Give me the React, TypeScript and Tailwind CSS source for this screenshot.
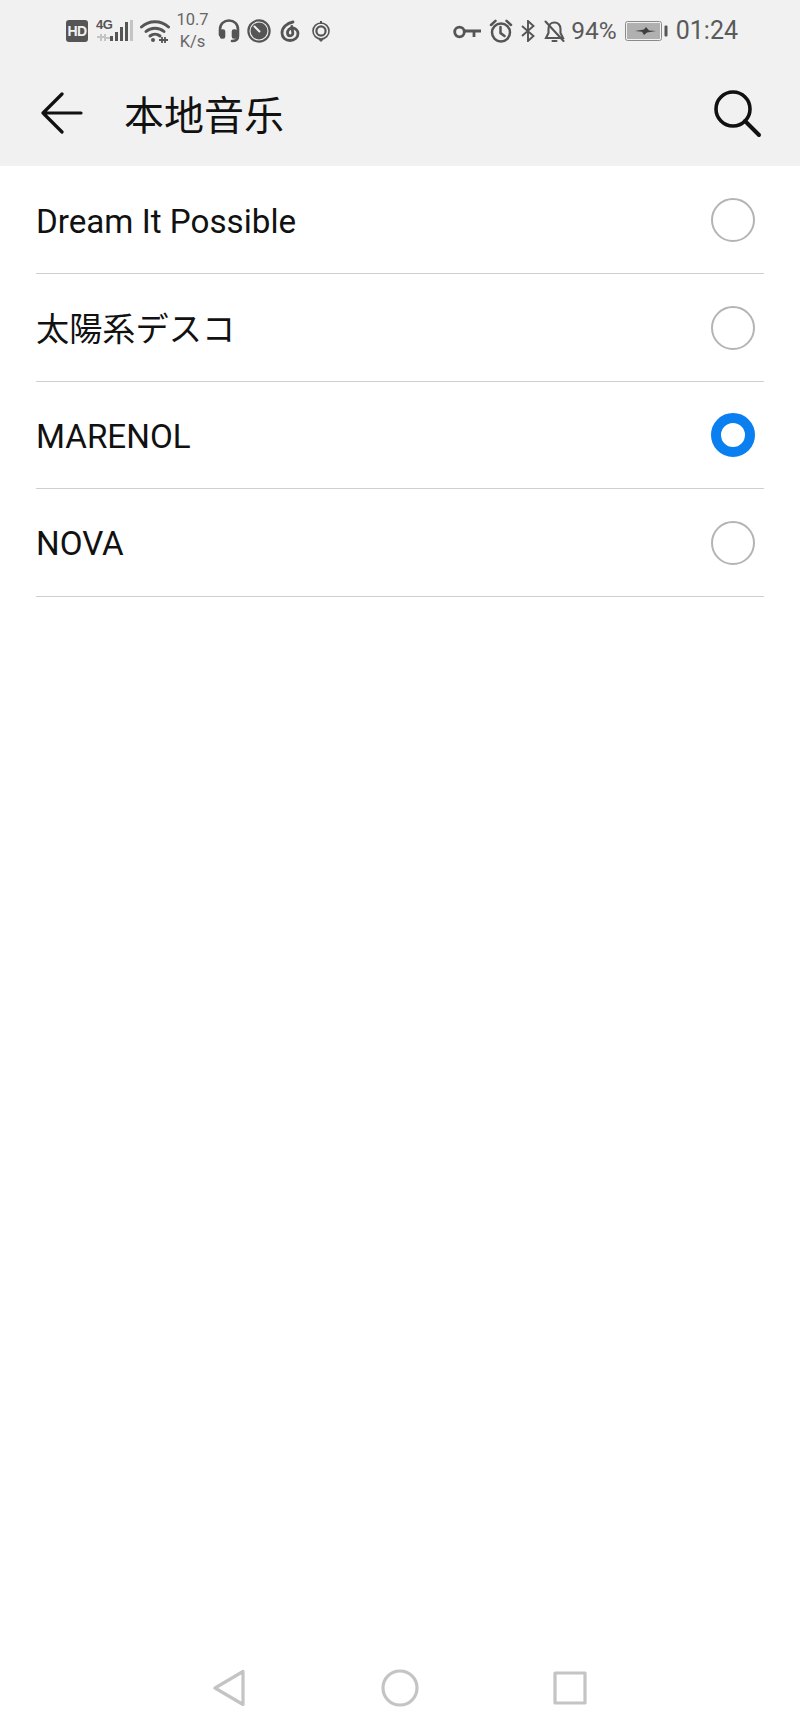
const ink = "#555555";

function Signal() {
  return (
    <div className="relative w-[37px] h-[24px]">
      <span className="absolute left-0 top-[-1px] text-[13px] leading-[13px] font-bold text-[#555555] [font-family:'Liberation_Sans',sans-serif] tracking-[-0.5px]">4G</span>
      <svg className="absolute left-0 top-0" width="37" height="24" viewBox="0 0 37 24">
        <path d="M1 18h7M5 15v7M9 15v7M9 19h5" stroke="#c4c4c4" strokeWidth="2" fill="none" />
        <rect x="14" y="17" width="3" height="5" fill={ink} />
        <rect x="19" y="13" width="3" height="9" fill={ink} />
        <rect x="24" y="8" width="3" height="14" fill={ink} />
        <rect x="29" y="3" width="3" height="19" fill={ink} />
        <rect x="34" y="1" width="3" height="21" fill="#c4c4c4" />
      </svg>
    </div>
  );
}

function Wifi() {
  return (
    <svg className="ml-[7px]" width="30" height="24" viewBox="0 0 30 24" fill="none" stroke={ink} strokeWidth="3" strokeLinecap="round">
      <path d="M1.5 8C9 1 21 1 28.5 8" />
      <path d="M6 12.5C11 8 19 8 24 12.5" />
      <path d="M10 17C13 14.5 17 14.5 20 17" />
      <circle cx="13" cy="21" r="2" fill={ink} stroke="none" />
      <path d="M19 21h9M22 18v6M25 18v6" strokeWidth="1.8" strokeLinecap="butt" />
    </svg>
  );
}

function Speed() {
  return (
    <div className="ml-[5px] w-[35px] flex flex-col items-center text-[16.5px] leading-[22px] text-[#666666] [font-family:Roboto,sans-serif]">
      <span>10.7</span>
      <span>K/s</span>
    </div>
  );
}

function Headphones() {
  return (
    <svg className="ml-[8px]" width="22" height="24" viewBox="0 0 22 24" fill="none" stroke={ink} strokeWidth="2.6" strokeLinecap="round">
      <path d="M2 16V10.5C2 5 6 1.5 11 1.5S20 5 20 10.5V17C20 20.5 18 22 14 22" />
      <rect x="3" y="11.5" width="3" height="7" rx="1" fill={ink} />
      <rect x="15" y="11.5" width="3" height="7" rx="1" fill={ink} />
    </svg>
  );
}

function Timer() {
  return (
    <svg className="ml-[7px]" width="24" height="24" viewBox="0 0 24 24">
      <circle cx="12" cy="12" r="11.7" fill={ink} />
      <circle cx="12" cy="12" r="9" fill="none" stroke="#f1f1f1" strokeWidth="1.1" />
      <path d="M7.5 7.5L12.5 12.5" stroke="#f1f1f1" strokeWidth="2" strokeLinecap="round" />
    </svg>
  );
}

function Netease() {
  return (
    <svg className="ml-[9px]" width="20" height="22" viewBox="0 0 20 22" fill="none" stroke={ink} strokeWidth="2.8" strokeLinecap="round">
      <path d="M13 2C7 3 2 7.5 2 13C2 17.5 5.5 20.5 10 20.5C14.5 20.5 18 17.5 18 13.5C18 10 15 8 12.5 8C9.5 8 7.5 10.5 7.5 13C7.5 14.8 8.8 15.8 10.2 15.8C11.8 15.8 13 14.5 12.8 12.8L11.8 6.5" />
    </svg>
  );
}

function Ring() {
  return (
    <svg className="ml-[12px]" width="18" height="22" viewBox="0 0 18 22" fill="none" stroke={ink}>
      <circle cx="9" cy="11" r="8" strokeWidth="1.6" />
      <circle cx="9" cy="11" r="4.6" strokeWidth="2.2" />
      <path d="M9 1v3" strokeWidth="2" />
      <path d="M7 19.5L9 21.5L11 19.5Z" fill={ink} strokeWidth="1" />
    </svg>
  );
}

function Key() {
  return (
    <svg className="mt-[2px]" width="28" height="14" viewBox="0 0 28 14" fill="none" stroke={ink} strokeWidth="2.8">
      <circle cx="6.5" cy="7" r="4.8" />
      <path d="M11.5 6h16.5M21 6v6" />
    </svg>
  );
}

function Alarm() {
  return (
    <svg className="ml-[8px]" width="24" height="24" viewBox="0 0 23 24" fill="none" stroke={ink} strokeWidth="2.5" strokeLinecap="round">
      <circle cx="11.5" cy="13.5" r="9" />
      <path d="M11 8v6l4 3" />
      <path d="M1.5 6L6 1.8M21.5 6L17 1.8" />
    </svg>
  );
}

function Bluetooth() {
  return (
    <svg className="ml-[8px]" width="14" height="22" viewBox="0 0 14 22" fill="none" stroke={ink} strokeWidth="1.9">
      <path d="M1 6L12.5 16L7 21V1L12.5 6L1 16" />
    </svg>
  );
}

function Bell() {
  return (
    <svg className="ml-[9px]" width="21" height="23" viewBox="0 0 21 23" fill="none" stroke={ink} strokeWidth="2.1" strokeLinecap="round">
      <path d="M4.5 9C4.5 5 7 2.5 10.5 2.5S16.5 5 16.5 9V13L19 18H2L4.5 13Z" />
      <path d="M8.5 21H12.5M1.5 1.5L19.5 21" />
    </svg>
  );
}

function Battery() {
  return (
    <svg className="ml-[8px]" width="43" height="20" viewBox="0 0 43 20">
      <rect x="0.5" y="0.5" width="36" height="19" rx="2" fill="none" stroke="#8a8a8a" />
      <rect x="2" y="2" width="33" height="16" fill="#b0b0b0" />
      <path d="M10 10L19 8.5L21 6L24 9.5L31 10L22 11.5L19 14L17 10.8Z" fill="#3f3f3f" />
      <rect x="39.5" y="4.5" width="3" height="11" rx="1" fill={ink} />
    </svg>
  );
}

function StatusBar() {
  return (
    <div className="h-[56px] flex items-center justify-between pl-[66px] pr-[62px] pt-[6px]">
      <div className="flex items-center">
        <div className="w-[22px] h-[22px] rounded-[3px] bg-[#555555] flex items-center justify-center text-[14px] tracking-[-0.5px] font-bold text-[#f1f1f1] [font-family:'Liberation_Sans',sans-serif]">HD</div>
        <div className="ml-[8px]"><Signal /></div>
        <Wifi />
        <Speed />
        <Headphones />
        <Timer />
        <Netease />
        <Ring />
      </div>
      <div className="flex items-center">
        <Key />
        <Alarm />
        <Bluetooth />
        <Bell />
        <span className="ml-[6px] text-[24.5px] leading-[30px] text-[#5a5a5a] [font-family:Roboto,sans-serif]">94%</span>
        <Battery />
        <span className="ml-[8px] text-[25px] leading-[30px] text-[#5a5a5a] [font-family:Roboto,sans-serif]">01:24</span>
      </div>
    </div>
  );
}

function Row({ label, selected, box, text }: { label: string; selected?: boolean; box: string; text: string }) {
  return (
    <div className={`${box} mx-[36px] flex items-center justify-between border-b border-[#cfcfcf] pr-[9px]`}>
      <span className={`${text} text-[33.2px] leading-[40px] text-[#111111] [font-family:Roboto,'Noto_Sans_CJK_JP',sans-serif]`}>{label}</span>
      {selected ? (
        <div className="w-[44px] h-[44px] rounded-full border-[10.5px] border-[#0a7ff0]" />
      ) : (
        <div className="w-[44px] h-[44px] rounded-full border-2 border-[#b4b4b4]" />
      )}
    </div>
  );
}

export default function App() {
  return (
    <div className="w-[800px] h-[1733px] bg-white flex flex-col overflow-hidden">
      <div className="bg-[#f1f1f1] h-[166px] shrink-0">
        <StatusBar />
        <div className="h-[110px] pt-[1px] flex items-center justify-between pl-[41px] pr-[37px]">
          <div className="flex items-center">
            <svg className="mt-[3px]" width="42" height="42" viewBox="0 0 42 42" fill="none" stroke="#111111" strokeWidth="3.2" strokeLinecap="round" strokeLinejoin="round">
              <path d="M40 21H2M21 2L2 21L21 40" />
            </svg>
            <span className="ml-[41px] mt-[2px] text-[40px] leading-[50px] text-[#111111] [font-family:'Noto_Sans_CJK_SC',sans-serif]">本地音乐</span>
          </div>
          <svg className="mt-[5px]" width="50" height="50" viewBox="0 0 50 50" fill="none" stroke="#111111" strokeWidth="3.6" strokeLinecap="round">
            <circle cx="20" cy="20" r="17" />
            <path d="M32 32L46 46" strokeWidth="4" />
          </svg>
        </div>
      </div>
      <Row box="h-[108px] pt-[1px]" text="mt-[4px]" label="Dream It Possible" />
      <Row box="h-[108px]" text="mt-[5px]" label="太陽系デスコ" />
      <Row box="h-[107px] pb-[1px]" text="mt-[4px]" label="MARENOL" selected />
      <Row box="h-[108px]" text="mt-[3px]" label="NOVA" />
      <div className="mt-auto h-[90px] flex items-center justify-center">
        <svg width="32" height="38" viewBox="0 0 32 38" fill="none" stroke="#c4c4c4" strokeWidth="3.2" strokeLinejoin="round">
          <path d="M30 2.5V35.5L2 19Z" />
        </svg>
        <svg className="ml-[136px]" width="38" height="38" viewBox="0 0 38 38" fill="none" stroke="#c4c4c4" strokeWidth="3.2">
          <circle cx="19" cy="19" r="17" />
        </svg>
        <svg className="ml-[134px]" width="34" height="34" viewBox="0 0 34 34" fill="none" stroke="#c4c4c4" strokeWidth="3.2" strokeLinejoin="round">
          <rect x="2" y="2" width="30" height="30" />
        </svg>
      </div>
    </div>
  );
}
